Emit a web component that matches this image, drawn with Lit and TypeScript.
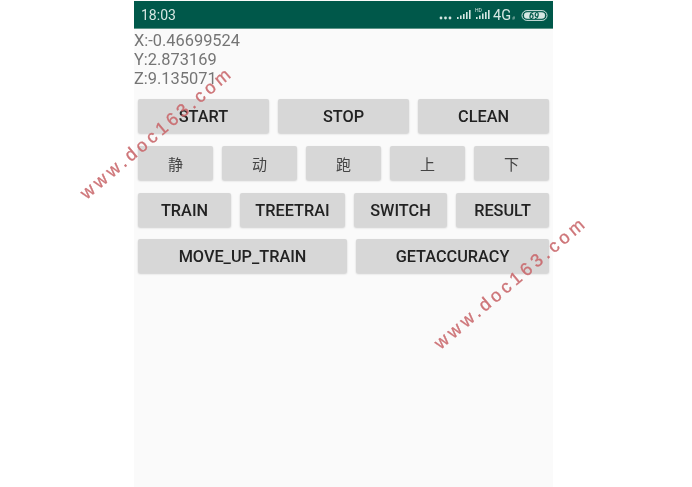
import { LitElement, html, css } from "lit";
import { customElement } from "lit/decorators.js";

const rows: { cls: string; items: string[] }[] = [
  { cls: "r1", items: ["START", "STOP", "CLEAN"] },
  { cls: "r2", items: ["静", "动", "跑", "上", "下"] },
  { cls: "r3", items: ["TRAIN", "TREETRAI", "SWITCH", "RESULT"] },
  { cls: "r4", items: ["MOVE_UP_TRAIN", "GETACCURACY"] },
];

@customElement("app-root")
export class AppRoot extends LitElement {
  static styles = css`
    :host {
      display: block;
      width: 692px;
      height: 487px;
      background: #fff;
      overflow: hidden;
      position: relative;
      font-family: Roboto, "Noto Sans CJK SC", sans-serif;
    }
    .phone {
      width: 419px;
      height: 487px;
      margin-left: 134px;
      padding-top: 1px;
      box-sizing: border-box;
      background: #fafafa;
      filter: blur(0.35px);
    }
    .status {
      height: 28px;
      background: #00584a;
      display: flex;
      align-items: center;
      justify-content: space-between;
      padding: 0 5px 0 7px;
      color: #d5e6e2;
      font-size: 14px;
      box-sizing: border-box;
      border-bottom: 1px solid #5d9488;
    }
    .status svg { display: block; }
    .readout {
      padding-top: 2px;
      font-size: 16.4px;
      line-height: 19px;
      color: #757575;
      height: 70px;
      box-sizing: border-box;
    }
    .buttons {
      display: flex;
      flex-direction: column;
      padding: 0 4px;
    }
    .row { display: grid; column-gap: 9px; }
    .r1 { grid-template-columns: repeat(3, 1fr); margin-bottom: 13px; }
    .r2 { grid-template-columns: repeat(5, 1fr); margin-bottom: 13px; }
    .r3 { grid-template-columns: 93px 105px 93px 93px; margin-bottom: 12px; }
    .r4 { grid-template-columns: 209px 193px; }
    .btn {
      height: 34px;
      box-sizing: border-box;
      padding-top: 1px;
      display: flex;
      align-items: center;
      justify-content: center;
      background: #d7d7d7;
      border-radius: 2px;
      box-shadow: 0 1px 2px rgba(0, 0, 0, 0.18);
      color: #222;
      font-size: 16.3px;
      font-weight: 500;
      white-space: nowrap;
    }
    .r2 .btn { padding-top: 0; font-weight: 400; font-size: 15px; color: #444; }
    .mark {
      position: absolute;
      color: #c9676b;
      font-family: "Liberation Sans", sans-serif;
      font-size: 18px;
      letter-spacing: 3.8px;
      -webkit-text-stroke: 0.35px #c9676b;
      white-space: nowrap;
      transform: translate(-50%, -50%) rotate(-40.3deg);
      opacity: 0.9;
    }
    .m1 { left: 157px; top: 133px; }
    .m2 { left: 511px; top: 283px; }
  `;

  render() {
    return html`
      <div class="phone">
        <div class="status">
          <span>18:03</span>
          <svg width="110" height="16" viewBox="0 0 110 16" fill="#d5e6e2">
            <circle cx="3" cy="11" r="1.4" /><circle cx="7.5" cy="11" r="1.4" /><circle cx="12" cy="11" r="1.4" />
            <rect x="19" y="10" width="1.6" height="2" /><rect x="22" y="8.5" width="1.6" height="3.5" /><rect x="25" y="7" width="1.6" height="5" /><rect x="28" y="5" width="1.6" height="7" /><rect x="31" y="3" width="1.6" height="9" />
            <rect x="38" y="10" width="1.6" height="2" /><rect x="41" y="8.5" width="1.6" height="3.5" /><rect x="44" y="6.5" width="1.6" height="5.5" /><rect x="47" y="5" width="1.6" height="7" /><rect x="50" y="3" width="1.6" height="9" />
            <text x="37" y="5" font-size="5" font-family="Roboto">HD</text>
            <text x="55" y="13" font-size="14.5" font-family="Roboto">4G</text>
            <text x="74" y="13" font-size="5" font-family="Roboto" opacity="0.6">#</text>
            <rect x="84" y="3.6" width="25" height="9.8" rx="4.9" fill="none" stroke="#d5e6e2" stroke-width="1" />
            <rect x="86" y="5.2" width="21" height="6.6" rx="3.3" />
            <text x="91" y="11.5" font-size="9" font-weight="700" font-style="italic" font-family="Roboto" fill="#00584a">69</text>
          </svg>
        </div>
        <div class="readout">
          <div>X:-0.46699524</div>
          <div>Y:2.873169</div>
          <div>Z:9.135071</div>
        </div>
        <div class="buttons">
          ${rows.map(
            (r) => html`<div class="row ${r.cls}">
              ${r.items.map((t) => html`<div class="btn">${t}</div>`)}
            </div>`
          )}
        </div>
      </div>
      <div class="mark m1">www.doc163.com</div>
      <div class="mark m2">www.doc163.com</div>
    `;
  }
}
